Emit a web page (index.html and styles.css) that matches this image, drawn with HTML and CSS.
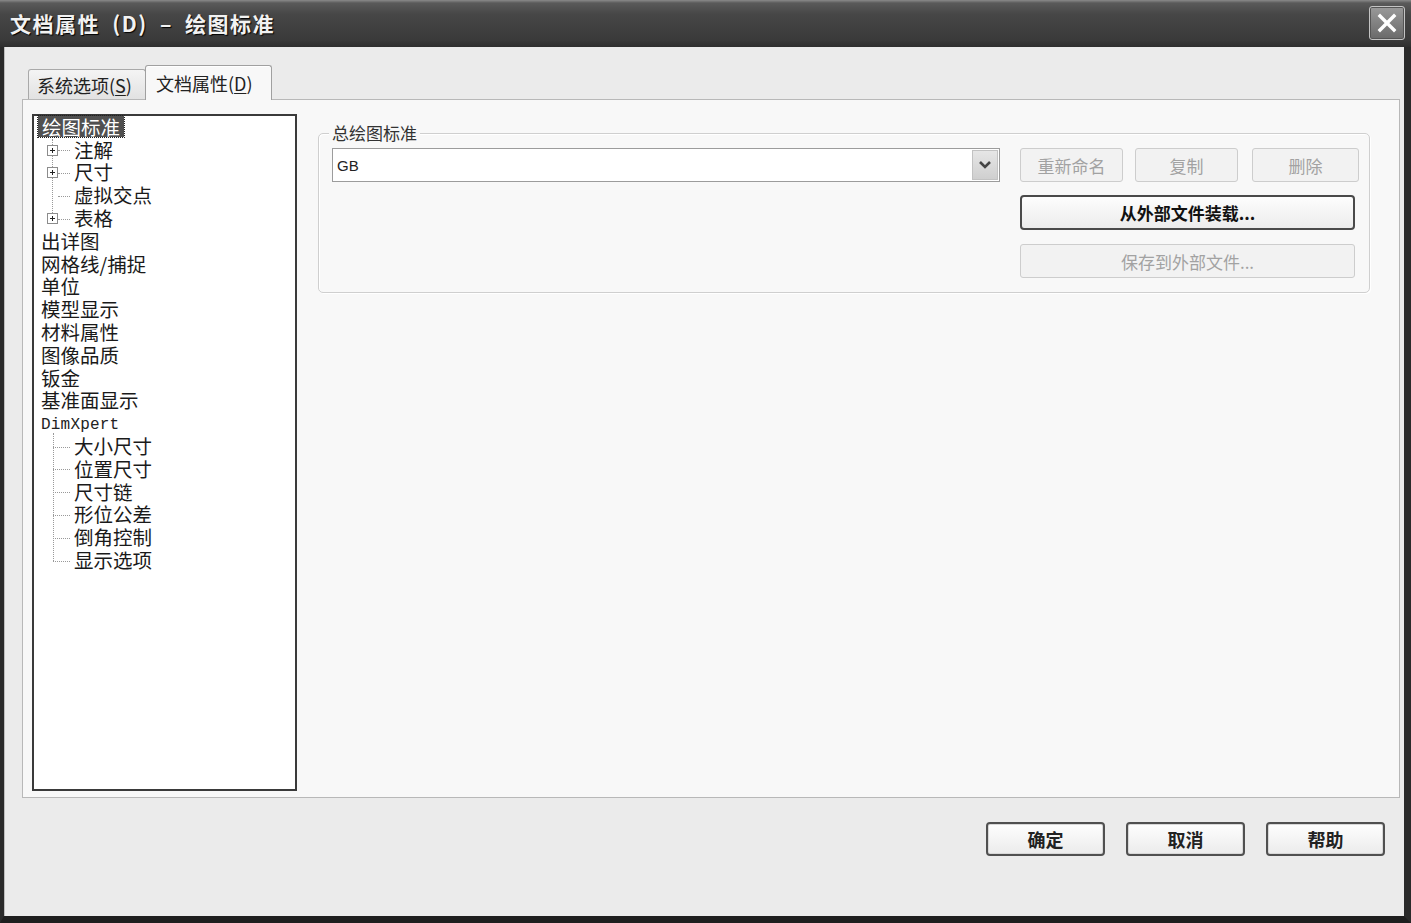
FILE: index.html
```html
<!DOCTYPE html>
<html lang="zh">
<head>
<meta charset="utf-8">
<title>文档属性 (D) – 绘图标准</title>
<link rel="stylesheet" href="styles.css">
</head>
<body>
<div class="window">
  <div class="titlebar">
    <span class="title">文档属性 (D) – 绘图标准</span>
    <span class="close">
      <svg width="22" height="22" viewBox="0 0 22 22"><path d="M4 4 L18 18 M18 4 L4 18" stroke="#fff" stroke-width="3.4" stroke-linecap="square"/></svg>
    </span>
  </div>
  <div class="client">
    <div class="tabs">
      <div class="tab">系统选项(<u>S</u>)</div>
      <div class="tab active">文档属性(<u>D</u>)</div>
    </div>
    <div class="panel">
      <div class="tree">
        <div class="row top"><span class="label selected">绘图标准</span></div>
        <div class="kids">
          <div class="row child"><span class="twig"><span class="plus"></span></span><span class="label">注解</span></div>
          <div class="row child"><span class="twig"><span class="plus"></span></span><span class="label">尺寸</span></div>
          <div class="row child"><span class="twig"></span><span class="label">虚拟交点</span></div>
          <div class="row child"><span class="twig"><span class="plus"></span></span><span class="label">表格</span></div>
        </div>
        <div class="row top"><span class="label">出详图</span></div>
        <div class="row top"><span class="label">网格线/捕捉</span></div>
        <div class="row top"><span class="label">单位</span></div>
        <div class="row top"><span class="label">模型显示</span></div>
        <div class="row top"><span class="label">材料属性</span></div>
        <div class="row top"><span class="label">图像品质</span></div>
        <div class="row top"><span class="label">钣金</span></div>
        <div class="row top"><span class="label">基准面显示</span></div>
        <div class="row top"><span class="label mono">DimXpert</span></div>
        <div class="kids dim">
          <div class="row child"><span class="twig"></span><span class="label">大小尺寸</span></div>
          <div class="row child"><span class="twig"></span><span class="label">位置尺寸</span></div>
          <div class="row child"><span class="twig"></span><span class="label">尺寸链</span></div>
          <div class="row child"><span class="twig"></span><span class="label">形位公差</span></div>
          <div class="row child"><span class="twig"></span><span class="label">倒角控制</span></div>
          <div class="row child"><span class="twig"></span><span class="label">显示选项</span></div>
        </div>
      </div>
      <div class="content">
        <div class="group">
          <span class="legend">总绘图标准</span>
          <div class="combo">
            <span class="combo-text">GB</span>
            <span class="combo-btn">
              <svg width="14" height="10" viewBox="0 0 14 10"><path d="M2 2 L7 7 L12 2" fill="none" stroke="#444" stroke-width="2.6"/></svg>
            </span>
          </div>
          <div class="actions">
            <div class="btn-row">
              <span class="btn disabled w1">重新命名</span>
              <span class="btn disabled w2">复制</span>
              <span class="btn disabled w3">删除</span>
            </div>
            <span class="btn wide default">从外部文件装载...</span>
            <span class="btn wide disabled second">保存到外部文件...</span>
          </div>
        </div>
      </div>
    </div>
    <div class="footer">
      <span class="btn dlg">确定</span>
      <span class="btn dlg">取消</span>
      <span class="btn dlg">帮助</span>
    </div>
  </div>
</div>
</body>
</html>
```
FILE: styles.css
```css
* { box-sizing: border-box; }
html, body { margin: 0; padding: 0; }
body {
  width: 1411px;
  height: 923px;
  overflow: hidden;
  background: #1e1e1e;
  font-family: "Noto Sans CJK SC", "Noto Sans", sans-serif;
  color: #1a1a1a;
}
.window {
  width: 1411px;
  height: 923px;
  display: flex;
  flex-direction: column;
}
.titlebar {
  height: 47px;
  flex: none;
  display: flex;
  align-items: center;
  justify-content: space-between;
  padding: 0 6px 0 10px;
  background: linear-gradient(#8a8a8a 0, #5a5a5a 3px, #474747 14px, #3a3a3a 40px, #2e2e2e 47px);
}
.title {
  color: #f2f2f2;
  font-size: 21px;
  font-weight: bold;
  letter-spacing: 1.5px;
  word-spacing: 6px;
  text-shadow: 1px 1px 1px #000;
  margin-top: -2px;
}
.close {
  width: 36px;
  height: 34px;
  margin-top: -2px;
  display: flex;
  align-items: center;
  justify-content: center;
  border: 1px solid #c4c4c4;
  border-radius: 3px;
  background: linear-gradient(#9a9a9a, #6a6a6a);
  box-shadow: inset 0 0 0 1px #555;
}
.client {
  flex: 1;
  display: flex;
  flex-direction: column;
  background: #ebebeb;
  border-left: 4px solid #2a2a2a;
  border-right: 7px solid #2a2a2a;
  border-bottom: 7px solid #1e1e1e;
  padding: 19px 4px 0 18px;
  box-shadow: inset 1px 0 0 #bdbdbd;
}
.tabs {
  display: flex;
  align-items: flex-end;
  height: 34px;
  padding-left: 6px;
  margin-bottom: -1px;
  position: relative;
  z-index: 1;
}
.tab {
  height: 30px;
  width: 118px;
  padding: 0 0 0 8px;
  display: flex;
  align-items: center;
  font-size: 18px;
  color: #222;
  background: linear-gradient(#f4f4f4, #e2e2e2);
  border: 1px solid #a9a9a9;
  border-bottom: none;
  border-radius: 3px 3px 0 0;
  margin-bottom: 1px;
}
.tab.active {
  height: 35px;
  width: 127px;
  padding-left: 10px;
  background: #f8f8f8;
  margin-bottom: 0;
  margin-left: -1px;
  border-color: #a0a0a0;
  box-shadow: inset 0 1px 0 #fff;
}
.tab u { text-underline-offset: 2px; }
.panel {
  height: 699px;
  flex: none;
  display: flex;
  background: #f8f8f8;
  border: 1px solid #b8b8b8;
  padding: 14px 29px 0 9px;
}
.tree {
  width: 265px;
  height: 677px;
  flex: none;
  background: #fff;
  border: 2px solid #3a3a3a;
  padding: 0;
  font-size: 19.5px;
}
.row {
  height: 22.8px;
  line-height: 22.8px;
  display: flex;
  align-items: center;
  white-space: nowrap;
}
.row.top { padding-left: 3px; }
.label { padding: 0 2px; line-height: 21px; margin-top: -2px; }
.row.top .label { padding: 0 4px; }
.label.selected {
  background: #505050;
  color: #fff;
  outline: 1px dotted #222;
  padding: 0 6px 0 3px;
  margin-left: 1px;
}
.label.mono {
  font-family: "Liberation Mono", "DejaVu Sans Mono", monospace;
  font-size: 16px;
  letter-spacing: 0.2px;
  color: #222;
  margin-top: 4px;
}
.kids { position: relative; }
.kids::before {
  content: "";
  position: absolute;
  left: 18px;
  top: 0;
  bottom: 11px;
  border-left: 1px dotted #999;
}
.kids.dim::before { left: 19px; top: -2px; }
.row.child { padding-left: 13px; }
.twig {
  width: 25px;
  height: 100%;
  display: flex;
  align-items: center;
  position: relative;
}
.plus {
  width: 11px;
  height: 11px;
  border: 1px solid #8c8c8c;
  background: #fff;
  position: relative;
  z-index: 1;
}
.plus::before, .plus::after {
  content: "";
  position: absolute;
  background: #222;
}
.plus::before { left: 2px; right: 2px; top: 4px; height: 1px; }
.plus::after { top: 2px; bottom: 2px; left: 4px; width: 1px; }
.twig::after {
  content: "";
  position: absolute;
  left: 11px;
  width: 12px;
  top: 50%;
  border-top: 1px dotted #999;
}
.kids.dim .twig::after { left: 6px; width: 17px; }
.content {
  flex: 1;
  padding: 19px 0 0 21px;
}
.group {
  position: relative;
  height: 160px;
  border: 1px solid #cfcfcf;
  border-radius: 5px;
  box-shadow: inset 1px 1px 0 #fff, 1px 1px 0 #fff;
  display: flex;
  padding: 14px 0 0 13px;
  gap: 20px;
}
.legend {
  position: absolute;
  left: 10px;
  top: -12px;
  padding: 0 3px;
  background: #f8f8f8;
  font-size: 17px;
  line-height: 22px;
  color: #333;
}
.combo {
  width: 668px;
  height: 34px;
  border: 1px solid #9c9c9c;
  background: #fff;
  display: flex;
  align-items: center;
  justify-content: space-between;
  padding: 0 1px 0 4px;
}
.combo-text {
  font-family: "Liberation Sans", Arial, sans-serif;
  font-size: 15px;
  color: #222;
}
.combo-btn {
  width: 26px;
  height: 30px;
  border: 1px solid #c2c2c2;
  background: linear-gradient(#e6e6e6, #cfcfcf);
  display: flex;
  align-items: center;
  justify-content: center;
}
.actions {
  width: 339px;
  display: flex;
  flex-direction: column;
}
.btn-row { display: flex; }
.btn {
  display: flex;
  align-items: center;
  justify-content: center;
  height: 34px;
  font-size: 17px;
  border-radius: 3px;
}
.btn.disabled {
  color: #a2a2a2;
  border: 1px solid #cdcdcd;
  background: #f2f2f2;
}
.w1 { width: 103px; }
.w2 { width: 103px; margin-left: 12px; }
.w3 { width: 107px; margin-left: 14px; }
.btn.wide { width: 335px; }
.btn.default {
  margin-top: 13px;
  height: 35px;
  border: 2px solid #4a4a4a;
  border-radius: 4px;
  background: linear-gradient(#fdfdfd, #ececec);
  color: #111;
  font-weight: bold;
}
.btn.second { margin-top: 14px; }
.footer {
  display: flex;
  justify-content: flex-end;
  gap: 21px;
  margin-top: 24px;
  padding-right: 15px;
}
.btn.dlg {
  width: 119px;
  height: 34px;
  border: 2px solid #505050;
  border-radius: 4px;
  background: linear-gradient(#fefefe, #ebebeb);
  box-shadow: inset 0 0 0 1px #d8d8d8;
  font-size: 18px;
  font-weight: bold;
  color: #222;
}
```
